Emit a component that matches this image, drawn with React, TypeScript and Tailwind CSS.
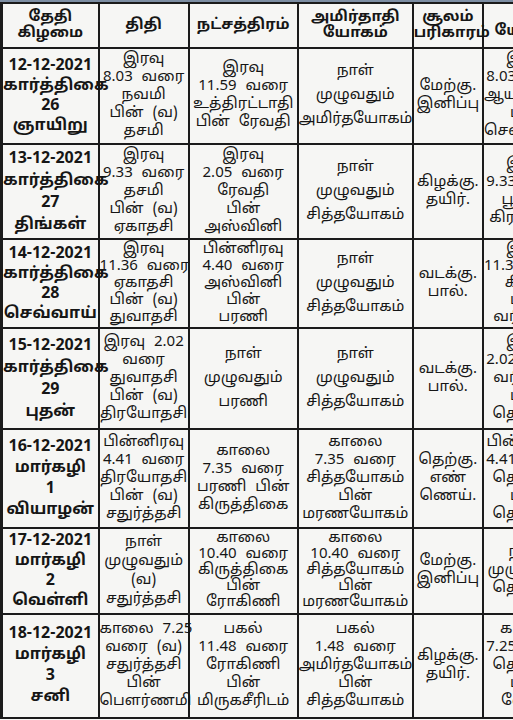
type Cell = { lines: string[]; lead?: number; bold?: boolean };

const widths = ["w-[97px]", "w-[90px]", "w-[109px]", "w-[115px]", "w-[70px]", "w-[88px]"];

const header: string[][] = [
  ["தேதி", "கிழமை"],
  ["திதி"],
  ["நட்சத்திரம்"],
  ["அமிர்தாதி", "யோகம்"],
  ["சூலம்", "பரிகாரம்"],
  ["யோகம்"],
];

const rows: { h: string; cells: Cell[] }[] = [
  {
    h: "h-[96px]",
    cells: [
      { lines: ["12-12-2021", "கார்த்திகை", "26", "ஞாயிறு"], lead: 20, bold: true },
      { lines: ["இரவு", "8.03 வரை", "நவமி", "பின் (வ)", "தசமி"] },
      { lines: ["இரவு", "11.59 வரை", "உத்திரட்டாதி", "பின் ரேவதி"] },
      { lines: ["நாள்", "முழுவதும்", "அமிர்தயோகம்"], lead: 24 },
      { lines: ["மேற்கு.", "இனிப்பு"] },
      { lines: ["இரவு", "8.03 வரை", "ஆயுஷ்மான்", "பின்", "சௌபாக்யம்"] },
    ],
  },
  {
    h: "h-[95px]",
    cells: [
      { lines: ["13-12-2021", "கார்த்திகை", "27", "திங்கள்"], lead: 22, bold: true },
      { lines: ["இரவு", "9.33 வரை", "தசமி", "பின் (வ)", "ஏகாதசி"] },
      { lines: ["இரவு", "2.05 வரை", "ரேவதி", "பின்", "அஸ்வினி"] },
      { lines: ["நாள்", "முழுவதும்", "சித்தயோகம்"], lead: 24 },
      { lines: ["கிழக்கு.", "தயிர்."] },
      { lines: ["இரவு", "9.33 வரை", "பூமாசி", "கிரகணம்"] },
    ],
  },
  {
    h: "h-[89px]",
    cells: [
      { lines: ["14-12-2021", "கார்த்திகை", "28", "செவ்வாய்"], lead: 20, bold: true },
      { lines: ["இரவு", "11.36 வரை", "ஏகாதசி", "பின் (வ)", "துவாதசி"], lead: 17 },
      { lines: ["பின்னிரவு", "4.40 வரை", "அஸ்வினி", "பின்", "பரணி"], lead: 17 },
      { lines: ["நாள்", "முழுவதும்", "சித்தயோகம்"], lead: 24 },
      { lines: ["வடக்கு.", "பால்."] },
      { lines: ["இரவு", "11.36 வரை", "கிருத்", "பின்", "வரீயான்"], lead: 17 },
    ],
  },
  {
    h: "h-[101px]",
    cells: [
      { lines: ["15-12-2021", "கார்த்திகை", "29", "புதன்"], lead: 22, bold: true },
      { lines: ["இரவு 2.02", "வரை", "துவாதசி", "பின் (வ)", "திரயோதசி"] },
      { lines: ["நாள்", "முழுவதும்", "பரணி"], lead: 24 },
      { lines: ["நாள்", "முழுவதும்", "சித்தயோகம்"], lead: 24 },
      { lines: ["வடக்கு.", "பால்."] },
      { lines: ["இரவு", "2.02 வரை", "வரீயான்", "பின்", "தெய்வம்"] },
    ],
  },
  {
    h: "h-[99px]",
    cells: [
      { lines: ["16-12-2021", "மார்கழி", "1", "வியாழன்"], lead: 21, bold: true },
      { lines: ["பின்னிரவு", "4.41 வரை", "திரயோதசி", "பின் (வ)", "சதுர்த்தசி"] },
      { lines: ["காலை", "7.35 வரை", "பரணி பின்", "கிருத்திகை"] },
      { lines: ["காலை", "7.35 வரை", "சித்தயோகம்", "பின்", "மரணயோகம்"] },
      { lines: ["தெற்கு.", "எண்", "ணெய்."] },
      { lines: ["பின்னிரவு", "4.41 வரை", "தெய்வம்", "பின்", "தெய்வம்"] },
    ],
  },
  {
    h: "h-[86px]",
    cells: [
      { lines: ["17-12-2021", "மார்கழி", "2", "வெள்ளி"], lead: 20, bold: true },
      { lines: ["நாள்", "முழுவதும்", "(வ)", "சதுர்த்தசி"], lead: 19 },
      { lines: ["காலை", "10.40 வரை", "கிருத்திகை", "பின்", "ரோகிணி"], lead: 16 },
      { lines: ["காலை", "10.40 வரை", "சித்தயோகம்", "பின்", "மரணயோகம்"], lead: 16 },
      { lines: ["மேற்கு.", "இனிப்பு"] },
      { lines: ["நாள்", "முழுவதும்", "தெய்வம்"] },
    ],
  },
  {
    h: "h-[104px]",
    cells: [
      { lines: ["18-12-2021", "மார்கழி", "3", "சனி"], lead: 21, bold: true },
      { lines: ["காலை 7.25", "வரை (வ)", "சதுர்த்தசி", "பின்", "பௌர்ணமி"] },
      { lines: ["பகல்", "11.48 வரை", "ரோகிணி", "பின்", "மிருகசீரிடம்"] },
      { lines: ["பகல்", "1.48 வரை", "அமிர்தயோகம்", "பின்", "சித்தயோகம்"] },
      { lines: ["கிழக்கு.", "தயிர்."] },
      { lines: ["காலை", "7.25 வரை", "தெய்வம்", "பின்", "வேதம்"] },
    ],
  },
];

const leads: Record<number, string> = {
  16: "leading-[16px]",
  17: "leading-[17px]",
  18: "leading-[18px]",
  19: "leading-[19px]",
  20: "leading-[20px]",
  21: "leading-[21px]",
  22: "leading-[22px]",
  24: "leading-[24px]",
};

export default function App() {
  return (
    <div
      className="h-[720px] w-[513px] overflow-hidden bg-[#f6f6f4] text-[#161616]"
      style={{ fontFamily: '"Noto Sans Tamil", "Lohit Tamil", "Liberation Sans", "Noto Sans", sans-serif' }}
    >
      <div className="h-[2px] bg-[#7d8ea3]" />
      <table className="w-[572px] table-fixed border-collapse border-l-[3px] border-t-2 border-[#1b1b1b] text-center text-[15px]">
        <colgroup>
          {widths.map((w) => (
            <col className={w} key={w} />
          ))}
        </colgroup>
        <thead>
          <tr className="h-[45px]">
            {header.map((lines, i) => (
              <th
                className={`border-2 border-[#1b1b1b] px-0 align-middle font-bold leading-[16px] ${i === 5 ? "pt-3" : ""}`}
                key={i}
              >
                {lines.map((l) => (
                  <div className="whitespace-nowrap" key={l}>
                    {l}
                  </div>
                ))}
              </th>
            ))}
          </tr>
        </thead>
        <tbody>
          {rows.map((row) => (
            <tr className={row.h} key={row.cells[0].lines[0]}>
              {row.cells.map((cell, i) => (
                <td
                  className={`border-2 border-[#1b1b1b] px-0 align-middle ${leads[cell.lead ?? 18]} ${
                    cell.bold ? "text-[16px] font-bold" : "font-normal [word-spacing:5px]"
                  }`}
                  key={i}
                >
                  {cell.lines.map((l, j) => (
                    <div className="whitespace-nowrap" key={j}>
                      {l}
                    </div>
                  ))}
                </td>
              ))}
            </tr>
          ))}
        </tbody>
      </table>
    </div>
  );
}
